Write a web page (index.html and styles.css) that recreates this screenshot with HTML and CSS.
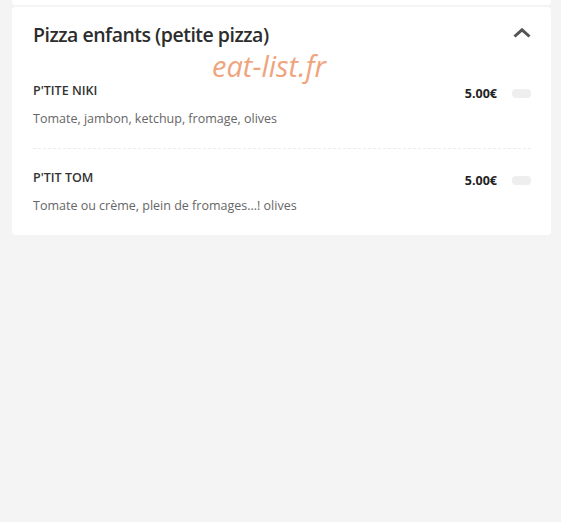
FILE: index.html
```html
<!DOCTYPE html>
<html lang="fr">
<head>
    <meta charset="UTF-8">
    <meta name="viewport" content="width=device-width, initial-scale=1.0">
    <title>Pizza enfants</title>
    <link rel="stylesheet" href="styles.css">
</head>
<body>
    <div class="card prev"></div>
    <div class="card category">
        <div class="cat-head">
            <h2>Pizza enfants (petite pizza)</h2>
            <svg class="chevron" width="18" height="10" viewBox="0 0 18 10">
                <path d="M1.5 8.5 L9 1.8 L16.5 8.5" fill="none" stroke="#555" stroke-width="3"/>
            </svg>
        </div>
        <span class="watermark">eat-list.fr</span>
        <div class="item">
            <div class="item-top">
                <h3>P'TITE NIKI</h3>
                <div class="item-right">
                    <span class="price">5.00€</span>
                    <span class="pill"></span>
                </div>
            </div>
            <p class="desc">Tomate, jambon, ketchup, fromage, olives</p>
        </div>
        <div class="item">
            <div class="item-top">
                <h3>P'TIT TOM</h3>
                <div class="item-right">
                    <span class="price">5.00€</span>
                    <span class="pill"></span>
                </div>
            </div>
            <p class="desc">Tomate ou crème, plein de fromages...! olives</p>
        </div>
    </div>
</body>
</html>
```

FILE: styles.css
```css
body {
    margin: 0;
    background-color: #f4f4f4;
    font-family: "Open Sans", Arial, sans-serif;
    color: #333;
    height: 522px;
}
.card {
    background: #fff;
    margin: 0 10px 0 12px;
    border-radius: 4px;
}
.card.prev { height: 5px; border-radius: 0 0 4px 4px; margin-bottom: 2px; }
.category {
    position: relative;
    padding: 14px 20px 21px 21px;
}
.cat-head { display: flex; justify-content: space-between; align-items: center; }
h2 {
    margin: 0;
    font-size: 19.5px;
    font-weight: 600;
    color: #2d2d2d;
    letter-spacing: -0.5px;
}
.chevron { margin-top: -4px; }
.watermark {
    position: absolute;
    left: 200px;
    top: 39px;
    font-size: 29px;
    font-style: italic;
    color: #f0a47e;
}
.item { padding: 34px 0 21px; border-bottom: 1px dashed #ececec; }
.item + .item { border-bottom: none; padding-top: 20px; padding-bottom: 0; }
.item-top { display: flex; justify-content: space-between; align-items: flex-start; }
h3 {
    margin: 0;
    font-size: 12.5px;
    font-weight: 600;
    color: #333;
}
.item-right { display: flex; align-items: center; gap: 15px; padding-top: 3px; }
.price { font-size: 12.5px; font-weight: 700; color: #222; }
.pill {
    width: 19px; height: 9px;
    background: #eee;
    border-radius: 4px;
}
.desc {
    margin: 8px 0 0;
    font-size: 12.5px;
    color: #666;
}
```
